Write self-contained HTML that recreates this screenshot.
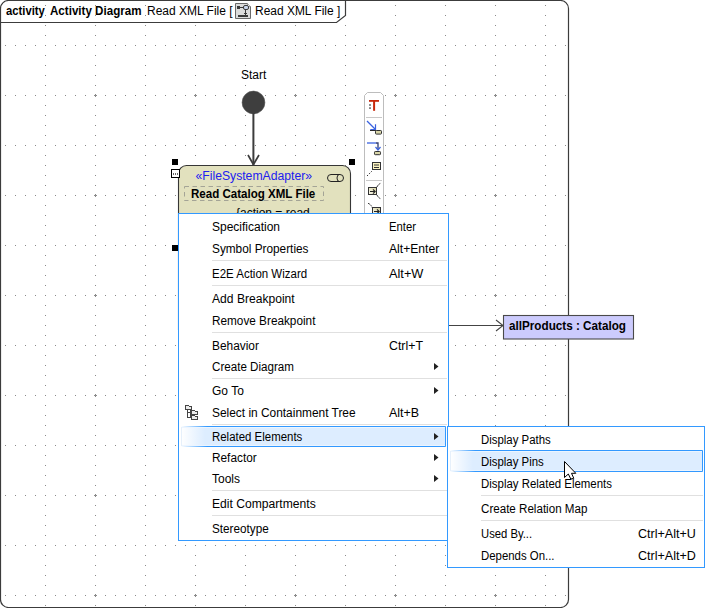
<!DOCTYPE html>
<html><head><meta charset="utf-8">
<style>
html,body{margin:0;padding:0;background:#fff;width:706px;height:608px;overflow:hidden}
svg{display:block}
text{font-family:"Liberation Sans",sans-serif}
</style></head>
<body>
<svg width="706" height="608" viewBox="0 0 706 608">
<defs>
  <pattern id="vdots" x="0" y="0" width="50" height="10" patternUnits="userSpaceOnUse">
    <rect x="45" y="5" width="1" height="1" fill="#8a8a8a"/>
  </pattern>
  <pattern id="hdots" x="0" y="0" width="10" height="50" patternUnits="userSpaceOnUse">
    <rect x="5" y="45" width="1" height="1" fill="#8a8a8a"/>
  </pattern>
  <pattern id="plus" x="0" y="0" width="100" height="100" patternUnits="userSpaceOnUse">
    <rect x="94" y="95" width="3" height="1" fill="#8a8a8a"/>
    <rect x="95" y="94" width="1" height="3" fill="#8a8a8a"/>
  </pattern>
  <linearGradient id="pinbox" x1="0" y1="1" x2="1" y2="0"><stop offset="0" stop-color="#fbfaf0"/><stop offset="1" stop-color="#d6d2a0"/></linearGradient>
  <clipPath id="frameclip"><rect x="1" y="1" width="567" height="606" rx="7"/></clipPath>
</defs>
<rect width="706" height="608" fill="#fff"/>
<g clip-path="url(#frameclip)">
  <rect width="706" height="608" fill="url(#vdots)"/>
  <rect width="706" height="608" fill="url(#hdots)"/>
  <rect width="706" height="608" fill="url(#plus)"/>
</g>
<!-- frame -->
<rect x="0.5" y="0.5" width="568" height="607" rx="8" fill="none" stroke="#3c3c3c" stroke-width="1.2"/>
<path d="M0.5 22.5 H336.5 L345.5 15.5 V0.5" fill="none" stroke="#3c3c3c" stroke-width="1.2"/>
<!-- header text -->
<text x="6" y="15" font-size="12" font-weight="bold" fill="#000" textLength="38.8" lengthAdjust="spacingAndGlyphs">activity</text>
<text x="50" y="15" font-size="12" font-weight="bold" fill="#000" textLength="91.5" lengthAdjust="spacingAndGlyphs">Activity Diagram</text>
<text x="147" y="15" font-size="12" fill="#000">Read XML File [</text>
<text x="255" y="15" font-size="12" fill="#000" textLength="85.3" lengthAdjust="spacingAndGlyphs">Read XML File ]</text>

<!-- header icon -->
<g>
  <path d="M235.5 3.5 H247.5 L250.5 6.5 V18.5 H235.5 Z" fill="#dcdcdc" stroke="#6a6a6a" stroke-width="1"/>
  <path d="M247.5 3.5 V6.5 H250.5" fill="#fff" stroke="#8a8a8a" stroke-width="0.8"/>
  <rect x="237" y="6" width="3" height="3" fill="#3a3a3a"/>
  <path d="M240 7.5 H243" stroke="#3a3a3a" stroke-width="1"/>
  <rect x="243.5" y="5.5" width="5" height="4" rx="1.5" fill="#c8d4ea" stroke="#3a3a3a" stroke-width="1"/>
  <path d="M245.5 9.5 V15" stroke="#3a3a3a" stroke-width="1"/>
  <path d="M244 13.5 H247" stroke="#3a3a3a" stroke-width="1"/>
  <rect x="238" y="15" width="10" height="2" fill="#3a3a3a"/>
</g>
<!-- start node -->
<text x="241" y="79" font-size="12" fill="#000">Start</text>
<circle cx="253.5" cy="102.5" r="11.4" fill="#3e3e3e" stroke="#555" stroke-width="0.6"/>
<path d="M253.4 113 V165" stroke="#3c3c3c" stroke-width="2"/>
<path d="M248 155 L253.4 164.5 L259 155" fill="none" stroke="#3c3c3c" stroke-width="1.7"/>
<!-- action node -->
<path d="M178.5 330 V173.5 A8 8 0 0 1 186.5 165.5 H342.5 A8 8 0 0 1 350.5 173.5 V330" fill="#e2e1be" stroke="#363636" stroke-width="1.1"/>
<rect x="172" y="159" width="6" height="6" fill="#000"/>
<rect x="349" y="159" width="6" height="6" fill="#000"/>
<rect x="172" y="245" width="6" height="6" fill="#000"/>
<rect x="171.5" y="169.5" width="8" height="8" fill="#fff" stroke="#000" stroke-width="1"/>
<rect x="173" y="173" width="1" height="2" fill="#666"/>
<rect x="175" y="173" width="1" height="2" fill="#666"/>
<rect x="177" y="173" width="1" height="2" fill="#666"/>
<text x="195.5" y="180" font-size="12" fill="#2020f0" textLength="116.5" lengthAdjust="spacingAndGlyphs">«FileSystemAdapter»</text>
<rect x="327.5" y="174.5" width="16" height="7" rx="3.5" fill="none" stroke="#222" stroke-width="1"/>
<path d="M339.5 174.5 A2.5 3.5 0 0 0 339.5 181.5" fill="none" stroke="#222" stroke-width="1"/>
<rect x="184.5" y="186.5" width="139" height="14" fill="none" stroke="#a4a496" stroke-width="1" stroke-dasharray="4.5,3.5"/>
<text x="191" y="198" font-size="12" font-weight="bold" fill="#000" textLength="124.3" lengthAdjust="spacingAndGlyphs">Read Catalog XML File</text>
<text x="236" y="217" font-size="12" fill="#000">{action = read</text>
<!-- toolbar -->
<g>
  <path d="M364.5 214 V95.5 L367.5 92.5 H380.5 L383.5 95.5 V214" fill="#fff" stroke="#bdbdbd" stroke-width="1"/>
  <rect x="366" y="117" width="16" height="1" fill="#c8c8c8"/>
  <rect x="366" y="180" width="16" height="1" fill="#c8c8c8"/>
  <!-- T icon -->
  <rect x="369" y="100" width="10" height="1.8" fill="#c8280c"/>
  <rect x="373.1" y="100" width="2" height="10.8" fill="#c8280c"/>
  <rect x="369.2" y="104.2" width="1.6" height="1.6" fill="#555"/>
  <rect x="369.2" y="107.3" width="1.6" height="1.6" fill="#555"/>
  <!-- diag arrow -->
  <path d="M367 121 L375 129" stroke="#3a62e0" stroke-width="1.3"/>
  <path d="M375.5 124.3 V129.5 H370.3" fill="none" stroke="#3a62e0" stroke-width="1.2" stroke-linejoin="miter"/>
  <path d="M370 130.5 H376" stroke="#2a2a2a" stroke-width="1"/>
  <rect x="375.5" y="130.5" width="6" height="3.6" rx="0.8" fill="#d8d5a8" stroke="#2f2f2f" stroke-width="1"/>
  <!-- elbow arrow -->
  <path d="M367 143 H376" stroke="#3a62e0" stroke-width="1.3"/>
  <path d="M376 143 H378 V149" fill="none" stroke="#2f3a70" stroke-width="1.3" stroke-linejoin="miter"/>
  <path d="M375.5 147 L378 150 L380.5 147" fill="none" stroke="#3a62e0" stroke-width="1.2"/>
  <rect x="374.5" y="151.5" width="6" height="3.2" rx="0.8" fill="#d8d5a8" stroke="#2f2f2f" stroke-width="1"/>
  <!-- note -->
  <rect x="372.5" y="162.5" width="8" height="7" fill="#fbf3c0" stroke="#333" stroke-width="1"/>
  <path d="M374 165 H379 M374 167.5 H379" stroke="#333" stroke-width="1"/>
  <path d="M367 176 L372 171" stroke="#333" stroke-width="1" stroke-dasharray="1.5,1.5"/>
  <!-- box with bracket -->
  <rect x="368.5" y="187.5" width="8" height="7" fill="url(#pinbox)" stroke="#333" stroke-width="1"/>
  <path d="M370 191.5 H375 M373 189.3 L375.2 191.5 L373 193.7" fill="none" stroke="#222" stroke-width="1.1"/>
  <path d="M377 187 Q378.3 184 381 183.3 M377 195 Q378.3 198 381 198.7" fill="none" stroke="#333" stroke-width="1" stroke-dasharray="2,0.7"/>
  <!-- partial -->
  <path d="M368 203.3 Q371 204.3 372 207.5" fill="none" stroke="#333" stroke-width="1" stroke-dasharray="2,0.7"/>
  <rect x="372.5" y="207.5" width="8" height="7" fill="url(#pinbox)" stroke="#333" stroke-width="1"/>
  <path d="M374 211.5 H379 M377 209.3 L379.2 211.5 L377 213.7" fill="none" stroke="#222" stroke-width="1.1"/>
</g>
<!-- object flow to allProducts -->
<path d="M448 325.5 H503" stroke="#444" stroke-width="1.1"/>
<path d="M496 320 L503 325.5 L496 331" fill="none" stroke="#444" stroke-width="1.1"/>
<rect x="503.5" y="315.5" width="130" height="23.5" fill="#cccbfd" stroke="#4a4a4a" stroke-width="1.1"/>
<text x="509" y="330" font-size="12" font-weight="bold" fill="#000" textLength="117" lengthAdjust="spacingAndGlyphs">allProducts : Catalog</text>

<!-- main menu -->
<defs><linearGradient id="hl" x1="0" x2="1" y1="0" y2="0"><stop offset="0" stop-color="#ffffff"/><stop offset="0.09" stop-color="#ddedff"/><stop offset="1" stop-color="#ddedff"/></linearGradient>
<linearGradient id="hlb" x1="0" x2="1" y1="0" y2="0"><stop offset="0" stop-color="#ffffff"/><stop offset="0.1" stop-color="#3399ff"/><stop offset="1" stop-color="#3399ff"/></linearGradient></defs>
<rect x="178.5" y="213.5" width="270" height="327" fill="#fff" stroke="#3399ff" stroke-width="1"/>
<rect x="212" y="260" width="235" height="1" fill="#e0e0e0"/>
<rect x="212" y="285" width="235" height="1" fill="#e0e0e0"/>
<rect x="212" y="332" width="235" height="1" fill="#e0e0e0"/>
<rect x="212" y="378" width="235" height="1" fill="#e0e0e0"/>
<rect x="212" y="424" width="235" height="1" fill="#e0e0e0"/>
<rect x="212" y="490" width="235" height="1" fill="#e0e0e0"/>
<rect x="212" y="515" width="235" height="1" fill="#e0e0e0"/>
<rect x="181" y="426" width="265" height="21" fill="url(#hl)"/>
<path d="M181 426.5 H445.5 V446.5 H181" fill="none" stroke="url(#hlb)" stroke-width="1"/>
<path d="M181.5 427 V446" stroke="#e6f0fb" stroke-width="1"/><path d="M182 427.5 H445 M182 445.5 H445" stroke="#ecf5ff" stroke-width="1"/>
<text x="212" y="231" font-size="12" fill="#000">Specification</text>
<text x="389" y="231" font-size="12" fill="#000" textLength="27" lengthAdjust="spacingAndGlyphs">Enter</text>
<text x="212" y="253" font-size="12" fill="#000" textLength="96.5" lengthAdjust="spacingAndGlyphs">Symbol Properties</text>
<text x="389" y="253" font-size="12" fill="#000" textLength="50.2" lengthAdjust="spacingAndGlyphs">Alt+Enter</text>
<text x="212" y="278" font-size="12" fill="#000" textLength="95.1" lengthAdjust="spacingAndGlyphs">E2E Action Wizard</text>
<text x="389" y="278" font-size="12" fill="#000" textLength="34.4" lengthAdjust="spacingAndGlyphs">Alt+W</text>
<text x="212" y="303" font-size="12" fill="#000" textLength="82.7" lengthAdjust="spacingAndGlyphs">Add Breakpoint</text>
<text x="212" y="325" font-size="12" fill="#000" textLength="103.4" lengthAdjust="spacingAndGlyphs">Remove Breakpoint</text>
<text x="212" y="350" font-size="12" fill="#000" textLength="46.9" lengthAdjust="spacingAndGlyphs">Behavior</text>
<text x="389" y="350" font-size="12" fill="#000" textLength="34" lengthAdjust="spacingAndGlyphs">Ctrl+T</text>
<text x="212" y="371" font-size="12" fill="#000" textLength="82" lengthAdjust="spacingAndGlyphs">Create Diagram</text>
<path d="M434 363.0 L438.5 366.5 L434 370.0 Z" fill="#222"/>
<text x="212" y="395" font-size="12" fill="#000">Go To</text>
<path d="M434 387.0 L438.5 390.5 L434 394.0 Z" fill="#222"/>
<text x="212" y="417" font-size="12" fill="#000" textLength="143.6" lengthAdjust="spacingAndGlyphs">Select in Containment Tree</text>
<text x="389" y="417" font-size="12" fill="#000" textLength="30.1" lengthAdjust="spacingAndGlyphs">Alt+B</text>
<text x="212" y="441" font-size="12" fill="#000" textLength="90.3" lengthAdjust="spacingAndGlyphs">Related Elements</text>
<path d="M434 433.0 L438.5 436.5 L434 440.0 Z" fill="#222"/>
<text x="212" y="462" font-size="12" fill="#000" textLength="44.7" lengthAdjust="spacingAndGlyphs">Refactor</text>
<path d="M434 454.0 L438.5 457.5 L434 461.0 Z" fill="#222"/>
<text x="212" y="483" font-size="12" fill="#000">Tools</text>
<path d="M434 475.0 L438.5 478.5 L434 482.0 Z" fill="#222"/>
<text x="212" y="508" font-size="12" fill="#000" textLength="103.7" lengthAdjust="spacingAndGlyphs">Edit Compartments</text>
<text x="212" y="533" font-size="12" fill="#000" textLength="56.7" lengthAdjust="spacingAndGlyphs">Stereotype</text>
<g fill="#ececec" stroke="#444" stroke-width="1" shape-rendering="crispEdges">
 <rect x="187.5" y="409.5" width="3" height="8" fill="#fff"/>
 <path d="M187.5 412.5 H190.5" fill="none"/>
 <path d="M185.5 405.5 H188.5 L189.5 406.5 H191.5 V409.5 H185.5 Z"/>
 <path d="M191.5 410.5 H194.5 L195.5 411.5 H197.5 V414.5 H191.5 Z"/>
 <path d="M191.5 415.5 H194.5 L195.5 416.5 H197.5 V419.5 H191.5 Z"/>
</g>
<!-- submenu -->
<rect x="447.5" y="426.5" width="257" height="141" fill="#fff" stroke="#3399ff" stroke-width="1"/>
<rect x="481" y="495" width="222" height="1" fill="#e0e0e0"/>
<rect x="481" y="520" width="222" height="1" fill="#e0e0e0"/>
<rect x="450" y="450" width="253" height="22" fill="url(#hl)"/>
<path d="M450 450.5 H702.5 V471.5 H450" fill="none" stroke="url(#hlb)" stroke-width="1"/>
<path d="M450.5 451 V471" stroke="#e6f0fb" stroke-width="1"/><path d="M451 451.5 H702 M451 470.5 H702" stroke="#ecf5ff" stroke-width="1"/>
<text x="481" y="444" font-size="12" fill="#000" textLength="69.7" lengthAdjust="spacingAndGlyphs">Display Paths</text>
<text x="481" y="466" font-size="12" fill="#000" textLength="62.7" lengthAdjust="spacingAndGlyphs">Display Pins</text>
<text x="481" y="488" font-size="12" fill="#000" textLength="131" lengthAdjust="spacingAndGlyphs">Display Related Elements</text>
<text x="481" y="513" font-size="12" fill="#000" textLength="106.4" lengthAdjust="spacingAndGlyphs">Create Relation Map</text>
<text x="481" y="538" font-size="12" fill="#000" textLength="51.1" lengthAdjust="spacingAndGlyphs">Used By...</text>
<text x="638" y="538" font-size="12" fill="#000" textLength="57.8" lengthAdjust="spacingAndGlyphs">Ctrl+Alt+U</text>
<text x="481" y="560" font-size="12" fill="#000" textLength="73.5" lengthAdjust="spacingAndGlyphs">Depends On...</text>
<text x="638" y="560" font-size="12" fill="#000" textLength="57.8" lengthAdjust="spacingAndGlyphs">Ctrl+Alt+D</text>
<path d="M564.5 461.5 V477.5 L568.3 474 L570.8 479 L573.8 478.3 L571.5 473.3 L575.8 473.3 Z" fill="#fff" stroke="#000" stroke-width="1" stroke-linejoin="miter"/>
</svg>
</body></html>
